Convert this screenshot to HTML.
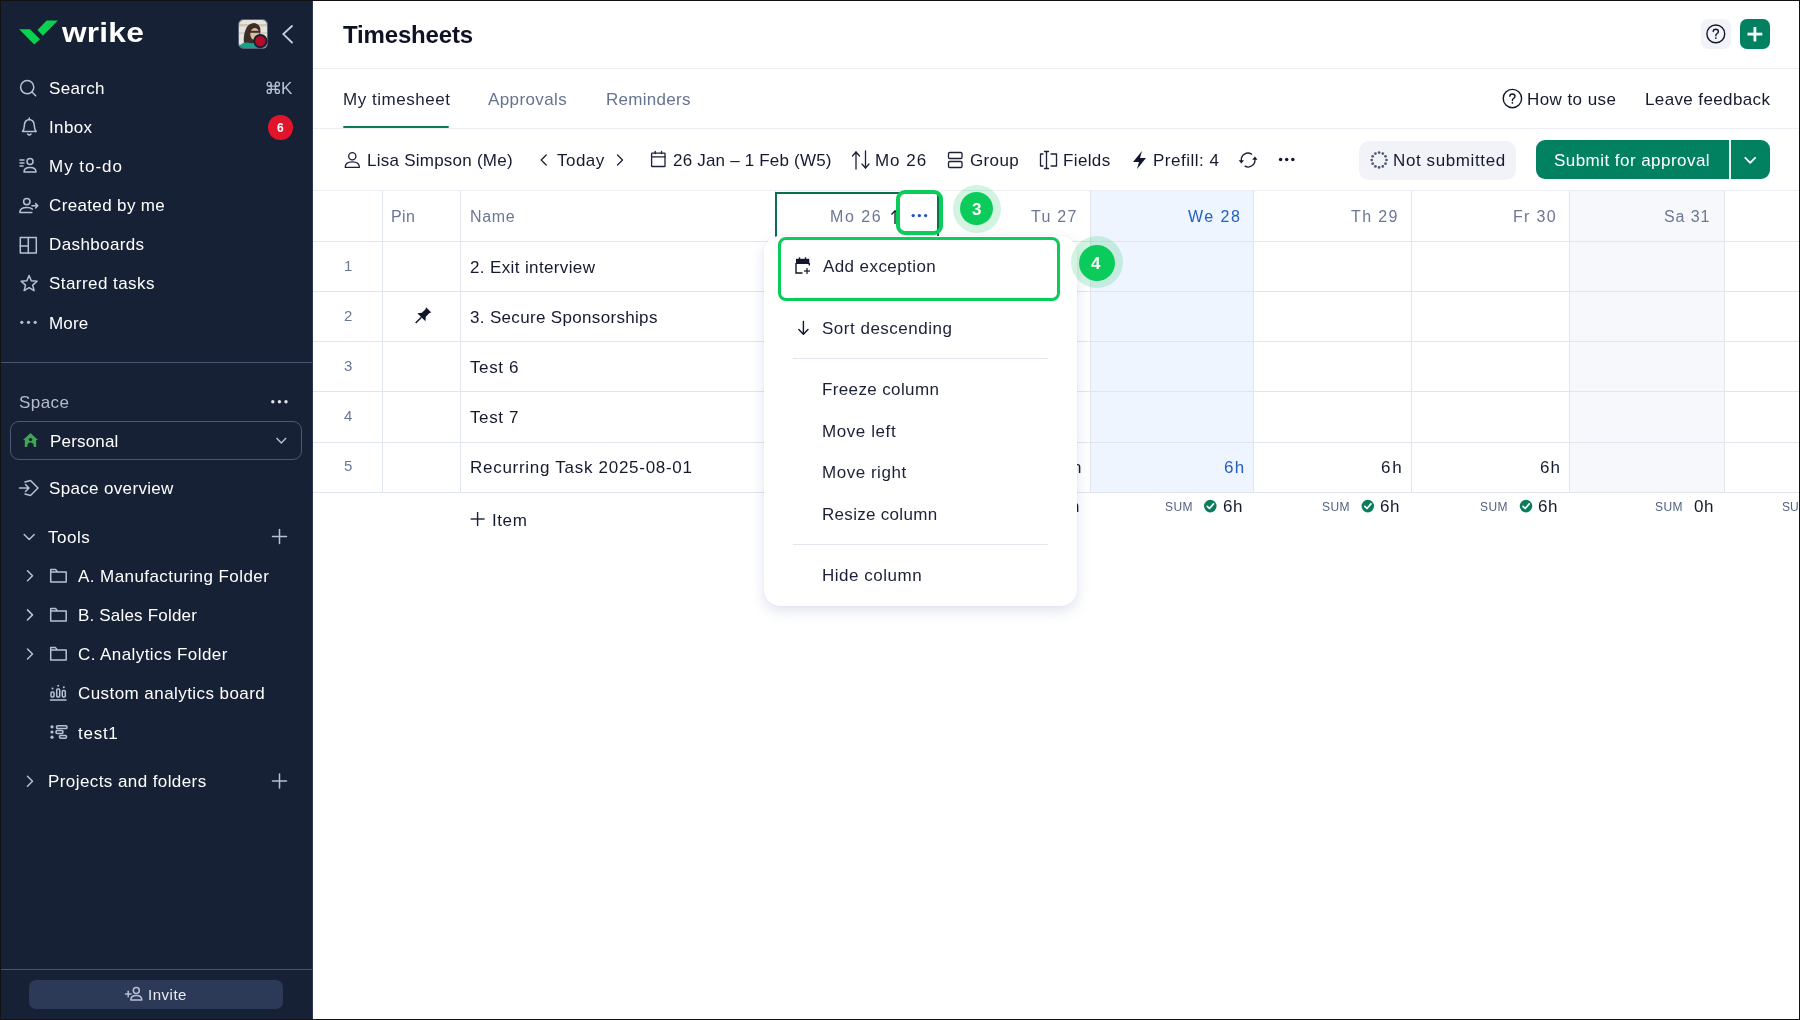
<!DOCTYPE html>
<html><head><meta charset="utf-8">
<style>
*{box-sizing:border-box;margin:0;padding:0}
html,body{width:1800px;height:1020px;overflow:hidden;background:#fff;font-family:"Liberation Sans",sans-serif;position:relative}
.t{position:absolute;white-space:nowrap;will-change:transform}
.b{position:absolute}
svg{position:absolute;overflow:visible}
</style></head><body>
<div class="b" style="left:0;top:0;width:313px;height:1020px;background:#172135"></div><svg style="left:0;top:0" width="313" height="60"><polygon points="19.2,29.2 30,29.2 40,39.2 34.2,44.6" fill="#0ad14e"/><polygon points="37.5,30 46.7,20.4 57.9,20.4 42.9,35.8" fill="#0ad14e"/></svg><div class="t" style="left:62.10px;top:18.20px;font-size:27px;line-height:30px;height:30px;color:#ffffff;font-weight:bold;letter-spacing:0.200px;transform:scaleX(1.17);transform-origin:0 0;">wrike</div><svg style="left:238px;top:19px" width="30" height="30" viewBox="0 0 30 30">
<rect width="30" height="30" fill="#e6e4df"/><rect x="0" y="5" width="30" height="2.5" fill="#cfc6b6"/><rect x="0" y="13" width="30" height="2" fill="#d6d0c6"/>
<path d="M6.5 27 Q4.5 18 7.5 11 Q10 4 16.5 4 Q22.5 5 22.5 12 L21.5 20 Q17 24 12 26 Z" fill="#3a2c26"/><ellipse cx="16.8" cy="15" rx="4.6" ry="6" fill="#dcbba3"/><rect x="12" y="11.8" width="9.6" height="2" fill="#3d302a"/>
<path d="M0 30 L2 26 Q6 22.5 12 24 Q18 24 22 30 Z" fill="#15a38e"/>
<path d="M0 0 H30 V30 H0 Z M6 0.5 H24 Q29.5 0.5 29.5 6 V24 Q29.5 29.5 24 29.5 H6 Q0.5 29.5 0.5 24 V6 Q0.5 0.5 6 0.5 Z" fill="#172135" fill-rule="evenodd"/>
<rect x="0.5" y="0.5" width="29" height="29" rx="5.5" fill="none" stroke="#56617c" stroke-width="1"/>
<circle cx="22.4" cy="22.1" r="6.2" fill="#b60a27" stroke="#172135" stroke-width="2"/></svg><svg style="left:0;top:0" width="313" height="60"><polyline points="292,26 283.3,34.1 292,42.5" fill="none" stroke="#c9cfdd" stroke-width="1.8" stroke-linecap="round"/></svg><div class="t" style="left:48.50px;top:79.20px;font-size:17px;line-height:19px;height:19px;color:#ffffff;font-weight:normal;letter-spacing:0.310px;">Search</div><div class="t" style="left:48.50px;top:118.25px;font-size:17px;line-height:19px;height:19px;color:#ffffff;font-weight:normal;letter-spacing:0.375px;">Inbox</div><div class="t" style="left:48.50px;top:157.30px;font-size:17px;line-height:19px;height:19px;color:#ffffff;font-weight:normal;letter-spacing:0.979px;">My to-do</div><div class="t" style="left:48.50px;top:196.35px;font-size:17px;line-height:19px;height:19px;color:#ffffff;font-weight:normal;letter-spacing:0.358px;">Created by me</div><div class="t" style="left:48.50px;top:235.40px;font-size:17px;line-height:19px;height:19px;color:#ffffff;font-weight:normal;letter-spacing:0.383px;">Dashboards</div><div class="t" style="left:48.50px;top:274.45px;font-size:17px;line-height:19px;height:19px;color:#ffffff;font-weight:normal;letter-spacing:0.438px;">Starred tasks</div><div class="t" style="left:48.90px;top:313.50px;font-size:17px;line-height:19px;height:19px;color:#ffffff;font-weight:normal;letter-spacing:0.150px;">More</div><svg style="left:0;top:0" width="313" height="120"><g fill="none" stroke="#b8c0d3" stroke-width="1.3"><circle cx="269.2" cy="84.2" r="2"/><circle cx="277.4" cy="84.2" r="2"/><circle cx="269.2" cy="91.4" r="2"/><circle cx="277.4" cy="91.4" r="2"/><path d="M271.2 84.2 V91.4 M275.4 84.2 V91.4 M269.2 86.2 H277.4 M269.2 89.4 H277.4"/></g></svg><div class="t" style="left:281.40px;top:79.10px;font-size:17px;line-height:19px;height:19px;color:#b8c0d3;font-weight:normal;letter-spacing:0.000px;">K</div><svg style="left:0;top:0" width="313" height="360">
<circle cx="27.2" cy="87.2" r="6.6" fill="none" stroke="#b8c0d3" stroke-width="1.5" stroke-linecap="round" stroke-linejoin="round"/><line x1="32" y1="92" x2="35.7" y2="95.7" fill="none" stroke="#b8c0d3" stroke-width="1.5" stroke-linecap="round" stroke-linejoin="round"/>
<path d="M22.5 131.5 Q24 130 24.3 126 Q24.3 120 29.3 119.5 Q34.3 120 34.3 126 Q34.6 130 36.2 131.5 Z" fill="none" stroke="#b8c0d3" stroke-width="1.5" stroke-linecap="round" stroke-linejoin="round"/><path d="M27.6 134 Q29.3 136 31 134" fill="none" stroke="#b8c0d3" stroke-width="1.5" stroke-linecap="round" stroke-linejoin="round"/><line x1="29.3" y1="118" x2="29.3" y2="119.5" fill="none" stroke="#b8c0d3" stroke-width="1.5" stroke-linecap="round" stroke-linejoin="round"/>
<line x1="20" y1="160" x2="24" y2="160" fill="none" stroke="#b8c0d3" stroke-width="1.5" stroke-linecap="round" stroke-linejoin="round"/><line x1="20" y1="163" x2="24" y2="163" fill="none" stroke="#b8c0d3" stroke-width="1.5" stroke-linecap="round" stroke-linejoin="round"/><line x1="20" y1="166" x2="23" y2="166" fill="none" stroke="#b8c0d3" stroke-width="1.5" stroke-linecap="round" stroke-linejoin="round"/>
<circle cx="30" cy="161.5" r="3" fill="none" stroke="#b8c0d3" stroke-width="1.5" stroke-linecap="round" stroke-linejoin="round"/><path d="M24 172 Q24 167.5 30 167.5 Q36 167.5 36 172 Z" fill="none" stroke="#b8c0d3" stroke-width="1.5" stroke-linecap="round" stroke-linejoin="round"/>
<circle cx="26.8" cy="201.6" r="3.2" fill="none" stroke="#b8c0d3" stroke-width="1.5" stroke-linecap="round" stroke-linejoin="round"/><path d="M19.8 212.6 Q19.8 207.6 26.8 207.6 Q30.8 207.6 32.3 209.1 M19.8 212.6 L31.8 212.6" fill="none" stroke="#b8c0d3" stroke-width="1.5" stroke-linecap="round" stroke-linejoin="round"/><path d="M32 205.8 L37.8 205.8 M35.6 203.6 L37.8 205.8 L35.6 208" fill="none" stroke="#b8c0d3" stroke-width="1.5" stroke-linecap="round" stroke-linejoin="round"/>
<rect x="20.3" y="237.5" width="16" height="15.5" fill="none" stroke="#b8c0d3" stroke-width="1.5" stroke-linecap="round" stroke-linejoin="round"/><line x1="28.3" y1="237.5" x2="28.3" y2="253" fill="none" stroke="#b8c0d3" stroke-width="1.5" stroke-linecap="round" stroke-linejoin="round"/><line x1="20.3" y1="246" x2="28.3" y2="246" fill="none" stroke="#b8c0d3" stroke-width="1.5" stroke-linecap="round" stroke-linejoin="round"/>
<polygon points="29.10,275.50 31.33,280.83 37.09,281.30 32.71,285.07 34.04,290.70 29.10,287.70 24.16,290.70 25.49,285.07 21.11,281.30 26.87,280.83" fill="none" stroke="#b8c0d3" stroke-width="1.5" stroke-linecap="round" stroke-linejoin="round"/>
<circle cx="21.8" cy="322.3" r="1.6" fill="#b8c0d3"/><circle cx="28.5" cy="322.3" r="1.6" fill="#b8c0d3"/><circle cx="35.2" cy="322.3" r="1.6" fill="#b8c0d3"/>
</svg><div class="b" style="left:268px;top:115px;width:24.5px;height:24.5px;border-radius:50%;background:#e0142b"></div><div class="t" style="left:276.50px;top:120.50px;font-size:12px;line-height:14px;height:14px;color:#ffffff;font-weight:bold;letter-spacing:0.000px;">6</div><div class="b" style="left:1px;top:362px;width:311px;height:1px;background:#475371"></div><div class="t" style="left:18.60px;top:393.30px;font-size:17px;line-height:19px;height:19px;color:#b6bdcc;font-weight:normal;letter-spacing:0.450px;">Space</div><svg style="left:0;top:0" width="313" height="420"><circle cx="272.8" cy="401.7" r="1.7" fill="#dfe3ea"/><circle cx="279.4" cy="401.7" r="1.7" fill="#dfe3ea"/><circle cx="286" cy="401.7" r="1.7" fill="#dfe3ea"/></svg><div class="b" style="left:10px;top:421px;width:292px;height:38.5px;border-radius:9px;border:1px solid #4b5876"></div><svg style="left:0;top:0" width="313" height="500"><path d="M23 440 L30.5 433 L38 440 L36.2 440 L36.2 447 L24.8 447 L24.8 440 Z" fill="#3fa754"/><circle cx="30.5" cy="439.6" r="1.7" fill="#172135"/><path d="M27.2 447 Q27.2 442.6 30.5 442.6 Q33.8 442.6 33.8 447 Z" fill="#172135"/><polyline points="276.5,438 281.3,443 286.1,438" fill="none" stroke="#b8c0d3" stroke-width="1.4"/><path d="M19.5 488 L29 488 M25.5 484.5 L29 488 L25.5 491.5 M25 482 L30.5 480.5 L38 488 L30.5 495.5 L25 494" fill="none" stroke="#b8c0d3" stroke-width="1.5" stroke-linecap="round" stroke-linejoin="round"/></svg><div class="t" style="left:49.70px;top:431.70px;font-size:17px;line-height:19px;height:19px;color:#ffffff;font-weight:normal;letter-spacing:0.186px;">Personal</div><div class="t" style="left:48.60px;top:478.70px;font-size:17px;line-height:19px;height:19px;color:#ffffff;font-weight:normal;letter-spacing:0.338px;">Space overview</div><svg style="left:0;top:0" width="313" height="800"><polyline points="24.2,534.5 29.2,539.5 34.2,534.5" fill="none" stroke="#b8c0d3" stroke-width="1.5" stroke-linecap="round" stroke-linejoin="round"/><line x1="279.5" y1="529.5" x2="279.5" y2="543.5" fill="none" stroke="#b8c0d3" stroke-width="1.5" stroke-linecap="round" stroke-linejoin="round"/><line x1="272.5" y1="536.5" x2="286.5" y2="536.5" fill="none" stroke="#b8c0d3" stroke-width="1.5" stroke-linecap="round" stroke-linejoin="round"/><line x1="279.5" y1="774" x2="279.5" y2="788" fill="none" stroke="#b8c0d3" stroke-width="1.5" stroke-linecap="round" stroke-linejoin="round"/><line x1="272.5" y1="781" x2="286.5" y2="781" fill="none" stroke="#b8c0d3" stroke-width="1.5" stroke-linecap="round" stroke-linejoin="round"/><polyline points="27.5,570.8 32.5,575.8 27.5,580.8" fill="none" stroke="#b8c0d3" stroke-width="1.5" stroke-linecap="round" stroke-linejoin="round"/><polyline points="27.5,609.9 32.5,614.9 27.5,619.9" fill="none" stroke="#b8c0d3" stroke-width="1.5" stroke-linecap="round" stroke-linejoin="round"/><polyline points="27.5,649 32.5,654 27.5,659" fill="none" stroke="#b8c0d3" stroke-width="1.5" stroke-linecap="round" stroke-linejoin="round"/><polyline points="27.5,776.2 32.5,781.2 27.5,786.2" fill="none" stroke="#b8c0d3" stroke-width="1.5" stroke-linecap="round" stroke-linejoin="round"/><path d="M50.7 569.4 L50.7 581.9 L66.2 581.9 L66.2 571.9 L57.5 571.9 L55.5 569.4 Z M50.7 571.9 L57.5 571.9" fill="none" stroke="#b8c0d3" stroke-width="1.5" stroke-linecap="round" stroke-linejoin="round"/><path d="M50.7 608.5 L50.7 621.0 L66.2 621.0 L66.2 611.0 L57.5 611.0 L55.5 608.5 Z M50.7 611.0 L57.5 611.0" fill="none" stroke="#b8c0d3" stroke-width="1.5" stroke-linecap="round" stroke-linejoin="round"/><path d="M50.7 647.6 L50.7 660.1 L66.2 660.1 L66.2 650.1 L57.5 650.1 L55.5 647.6 Z M50.7 650.1 L57.5 650.1" fill="none" stroke="#b8c0d3" stroke-width="1.5" stroke-linecap="round" stroke-linejoin="round"/><g fill="none" stroke="#b8c0d3" stroke-width="1.5" stroke-linecap="round" stroke-linejoin="round"><rect x="51" y="692" width="3" height="5" rx="1"/><rect x="56.7" y="689" width="3" height="8" rx="1"/><rect x="62.3" y="690.5" width="3" height="6.5" rx="1"/><line x1="50.5" y1="700" x2="66" y2="700"/></g>
<circle cx="52.5" cy="688.5" r="1" fill="#b8c0d3"/><circle cx="58.2" cy="685.7" r="1" fill="#b8c0d3"/><circle cx="63.8" cy="687.3" r="1" fill="#b8c0d3"/>
<g fill="#b8c0d3"><circle cx="52" cy="726.8" r="1.6"/><circle cx="52" cy="732" r="1.6"/><circle cx="52" cy="737.2" r="1.6"/></g>
<g fill="none" stroke="#b8c0d3" stroke-width="1.5" stroke-linecap="round" stroke-linejoin="round"><rect x="56.5" y="725.8" width="10.5" height="2.8" rx="1.2"/><rect x="56" y="730.6" width="7" height="2.8" rx="1.2"/><rect x="59.5" y="735.4" width="7" height="2.8" rx="1.2"/></g>
</svg><div class="t" style="left:48.40px;top:527.90px;font-size:17px;line-height:19px;height:19px;color:#ffffff;font-weight:normal;letter-spacing:0.500px;">Tools</div><div class="t" style="left:77.80px;top:567.10px;font-size:17px;line-height:19px;height:19px;color:#ffffff;font-weight:normal;letter-spacing:0.427px;">A. Manufacturing Folder</div><div class="t" style="left:77.80px;top:606.20px;font-size:17px;line-height:19px;height:19px;color:#ffffff;font-weight:normal;letter-spacing:0.186px;">B. Sales Folder</div><div class="t" style="left:77.80px;top:645.30px;font-size:17px;line-height:19px;height:19px;color:#ffffff;font-weight:normal;letter-spacing:0.422px;">C. Analytics Folder</div><div class="t" style="left:77.80px;top:684.40px;font-size:17px;line-height:19px;height:19px;color:#ffffff;font-weight:normal;letter-spacing:0.436px;">Custom analytics board</div><div class="t" style="left:77.80px;top:723.50px;font-size:17px;line-height:19px;height:19px;color:#ffffff;font-weight:normal;letter-spacing:0.737px;">test1</div><div class="t" style="left:48.40px;top:772.40px;font-size:17px;line-height:19px;height:19px;color:#ffffff;font-weight:normal;letter-spacing:0.418px;">Projects and folders</div><div class="b" style="left:1px;top:969px;width:311px;height:1px;background:#475371"></div><div class="b" style="left:312px;top:0;width:1px;height:1020px;background:#2b3858"></div><div class="b" style="left:29.3px;top:980px;width:253.4px;height:29px;border-radius:7px;background:#2c3a58"></div><svg style="left:0;top:0" width="313" height="1020"><g fill="none" stroke="#b8c0d3" stroke-width="1.5" stroke-linecap="round" stroke-linejoin="round" stroke="#e6e9ef" stroke-width="1.3"><line x1="125.5" y1="994" x2="131" y2="994"/><line x1="128.2" y1="991.3" x2="128.2" y2="996.7"/><circle cx="136.3" cy="990.5" r="3"/><path d="M130.8 1000 Q130.8 995.5 136.3 995.5 Q141.8 995.5 141.8 1000 Z"/></g></svg><div class="t" style="left:148.20px;top:985.60px;font-size:15px;line-height:17px;height:17px;color:#e9ecf2;font-weight:normal;letter-spacing:0.510px;">Invite</div><div class="t" style="left:343.30px;top:20.50px;font-size:24px;line-height:27px;height:27px;color:#0d1324;font-weight:bold;letter-spacing:-0.172px;">Timesheets</div><div class="b" style="left:1701px;top:19px;width:29.5px;height:29.5px;border-radius:7px;background:#f2f3f8"></div><div class="b" style="left:1740px;top:19px;width:29.5px;height:29.5px;border-radius:7px;background:#028161"></div><svg style="left:0;top:0" width="1800" height="200">
<circle cx="1715.8" cy="33.9" r="8.9" fill="none" stroke="#111729" stroke-width="1.4"/>
<path d="M1713.2 31.6 Q1713.2 29.3 1715.8 29.3 Q1718.4 29.3 1718.4 31.5 Q1718.4 33 1716.6 34 Q1715.8 34.6 1715.8 35.8" fill="none" stroke="#111729" stroke-width="1.4" stroke-linecap="round"/><circle cx="1715.8" cy="38.1" r="0.9" fill="#111729"/>
<line x1="1754.9" y1="27" x2="1754.9" y2="41.4" stroke="#fff" stroke-width="2.8"/><line x1="1747.5" y1="34.1" x2="1762.3" y2="34.1" stroke="#fff" stroke-width="2.8"/>
</svg><div class="b" style="left:313px;top:68px;width:1487px;height:1px;background:#eceef4"></div><div class="t" style="left:342.60px;top:89.90px;font-size:17px;line-height:19px;height:19px;color:#1b2136;font-weight:normal;letter-spacing:0.536px;">My timesheet</div><div class="t" style="left:488.20px;top:89.90px;font-size:17px;line-height:19px;height:19px;color:#667391;font-weight:normal;letter-spacing:0.387px;">Approvals</div><div class="t" style="left:605.70px;top:89.90px;font-size:17px;line-height:19px;height:19px;color:#667391;font-weight:normal;letter-spacing:0.275px;">Reminders</div><div class="b" style="left:313px;top:128px;width:1487px;height:1px;background:#eceef4"></div><div class="b" style="left:342.7px;top:126px;width:106.5px;height:2px;border-radius:1px;background:#0b7b5a"></div><svg style="left:0;top:0" width="1800" height="200">
<circle cx="1512.4" cy="98.6" r="9.2" fill="none" stroke="#111729" stroke-width="1.4"/>
<path d="M1509.8 96.3 Q1509.8 94 1512.4 94 Q1515 94 1515 96.2 Q1515 97.7 1513.2 98.7 Q1512.4 99.3 1512.4 100.5" fill="none" stroke="#111729" stroke-width="1.4" stroke-linecap="round"/><circle cx="1512.4" cy="102.8" r="0.9" fill="#111729"/>
</svg><div class="t" style="left:1527.20px;top:89.80px;font-size:17px;line-height:19px;height:19px;color:#151b2f;font-weight:normal;letter-spacing:0.428px;">How to use</div><div class="t" style="left:1644.90px;top:89.80px;font-size:17px;line-height:19px;height:19px;color:#151b2f;font-weight:normal;letter-spacing:0.377px;">Leave feedback</div><div class="b" style="left:313px;top:190px;width:1487px;height:1px;background:#eceef4"></div><svg style="left:0;top:0" width="1800" height="200">
<circle cx="352.3" cy="156.3" r="3.6" fill="none" stroke="#1b2136" stroke-width="1.3" stroke-linecap="round" stroke-linejoin="round"/><path d="M345.2 167.3 Q345.2 161.8 352.3 161.8 Q359.4 161.8 359.4 167.3 Z" fill="none" stroke="#1b2136" stroke-width="1.3" stroke-linecap="round" stroke-linejoin="round"/>
<polyline points="546.2,155 541.2,160 546.2,165" fill="none" stroke="#1b2136" stroke-width="1.3" stroke-linecap="round" stroke-linejoin="round" stroke-width="1.15"/>
<polyline points="617.5,155 622.5,160 617.5,165" fill="none" stroke="#1b2136" stroke-width="1.3" stroke-linecap="round" stroke-linejoin="round" stroke-width="1.15"/>
<rect x="651.6" y="153.2" width="13.4" height="13.3" rx="0.6" fill="none" stroke="#1b2136" stroke-width="1.3" stroke-linecap="round" stroke-linejoin="round"/><line x1="651.6" y1="156.9" x2="665" y2="156.9" fill="none" stroke="#1b2136" stroke-width="1.3" stroke-linecap="round" stroke-linejoin="round"/><line x1="655.2" y1="151.5" x2="655.2" y2="153.5" fill="none" stroke="#1b2136" stroke-width="1.3" stroke-linecap="round" stroke-linejoin="round"/><line x1="661.5" y1="151.5" x2="661.5" y2="153.5" fill="none" stroke="#1b2136" stroke-width="1.3" stroke-linecap="round" stroke-linejoin="round"/>
<line x1="856" y1="152" x2="856" y2="169" fill="none" stroke="#1b2136" stroke-width="1.3" stroke-linecap="round" stroke-linejoin="round"/><polyline points="852.5,156 856,152 859.5,156" fill="none" stroke="#1b2136" stroke-width="1.3" stroke-linecap="round" stroke-linejoin="round"/>
<line x1="865.5" y1="151" x2="865.5" y2="168" fill="none" stroke="#1b2136" stroke-width="1.3" stroke-linecap="round" stroke-linejoin="round"/><polyline points="862,164 865.5,168 869,164" fill="none" stroke="#1b2136" stroke-width="1.3" stroke-linecap="round" stroke-linejoin="round"/>
<rect x="948.5" y="152.5" width="13.5" height="6" rx="1.2" fill="none" stroke="#1b2136" stroke-width="1.3" stroke-linecap="round" stroke-linejoin="round"/><rect x="948.5" y="161.5" width="13.5" height="6" rx="1.2" fill="none" stroke="#1b2136" stroke-width="1.3" stroke-linecap="round" stroke-linejoin="round"/>
<path d="M1043 154 L1040.5 154 L1040.5 166 L1043 166 M1051 154 L1056.5 154 L1056.5 166 L1051 166" fill="none" stroke="#1b2136" stroke-width="1.3" stroke-linecap="round" stroke-linejoin="round"/><line x1="1046.5" y1="151.5" x2="1046.5" y2="168.5" fill="none" stroke="#1b2136" stroke-width="1.3" stroke-linecap="round" stroke-linejoin="round"/><line x1="1044.5" y1="151.5" x2="1048.5" y2="151.5" fill="none" stroke="#1b2136" stroke-width="1.3" stroke-linecap="round" stroke-linejoin="round"/><line x1="1044.5" y1="168.5" x2="1048.5" y2="168.5" fill="none" stroke="#1b2136" stroke-width="1.3" stroke-linecap="round" stroke-linejoin="round"/>
<path d="M1142 151 L1133 162 L1139 162 L1137 169 L1146 158 L1140 158 Z" fill="#10172b"/>
<path d="M1251.6 154.1 A6.8 6.8 0 0 0 1241.3 160.5" fill="none" stroke="#1b2136" stroke-width="1.3" stroke-linecap="round" stroke-linejoin="round"/><path d="M1238.7 160.2 L1244 160.2 L1241.35 163.6 Z" fill="#10172b"/>
<path d="M1245 166.2 A6.8 6.8 0 0 0 1254.9 159.5" fill="none" stroke="#1b2136" stroke-width="1.3" stroke-linecap="round" stroke-linejoin="round"/><path d="M1252.3 159.8 L1257.5 159.8 L1254.9 156.6 Z" fill="#10172b"/>
<circle cx="1280.6" cy="159.4" r="1.75" fill="#10172b"/><circle cx="1286.7" cy="159.4" r="1.75" fill="#10172b"/><circle cx="1292.8" cy="159.4" r="1.75" fill="#10172b"/>
</svg><div class="t" style="left:366.70px;top:151.00px;font-size:17px;line-height:19px;height:19px;color:#151b2f;font-weight:normal;letter-spacing:0.244px;">Lisa Simpson (Me)</div><div class="t" style="left:557.10px;top:151.00px;font-size:17px;line-height:19px;height:19px;color:#151b2f;font-weight:normal;letter-spacing:0.487px;">Today</div><div class="t" style="left:672.70px;top:151.00px;font-size:17px;line-height:19px;height:19px;color:#151b2f;font-weight:normal;letter-spacing:0.197px;">26 Jan – 1 Feb (W5)</div><div class="t" style="left:875.40px;top:151.00px;font-size:17px;line-height:19px;height:19px;color:#151b2f;font-weight:normal;letter-spacing:0.963px;">Mo 26</div><div class="t" style="left:970.30px;top:151.00px;font-size:17px;line-height:19px;height:19px;color:#151b2f;font-weight:normal;letter-spacing:0.363px;">Group</div><div class="t" style="left:1062.90px;top:151.00px;font-size:17px;line-height:19px;height:19px;color:#151b2f;font-weight:normal;letter-spacing:0.370px;">Fields</div><div class="t" style="left:1153.10px;top:151.00px;font-size:17px;line-height:19px;height:19px;color:#151b2f;font-weight:normal;letter-spacing:0.500px;">Prefill: 4</div><div class="b" style="left:1359.2px;top:140.5px;width:156.5px;height:39px;border-radius:10px;background:#f2f3f8"></div><svg style="left:0;top:0" width="1800" height="200"><circle cx="1386.50" cy="160.00" r="1.35" fill="#4b5877"/><circle cx="1385.51" cy="163.70" r="1.35" fill="#4b5877"/><circle cx="1382.80" cy="166.41" r="1.35" fill="#4b5877"/><circle cx="1379.10" cy="167.40" r="1.35" fill="#4b5877"/><circle cx="1375.40" cy="166.41" r="1.35" fill="#4b5877"/><circle cx="1372.69" cy="163.70" r="1.35" fill="#4b5877"/><circle cx="1371.70" cy="160.00" r="1.35" fill="#4b5877"/><circle cx="1372.69" cy="156.30" r="1.35" fill="#4b5877"/><circle cx="1375.40" cy="153.59" r="1.35" fill="#4b5877"/><circle cx="1379.10" cy="152.60" r="1.35" fill="#4b5877"/><circle cx="1382.80" cy="153.59" r="1.35" fill="#4b5877"/><circle cx="1385.51" cy="156.30" r="1.35" fill="#4b5877"/></svg><div class="t" style="left:1393.40px;top:151.00px;font-size:17px;line-height:19px;height:19px;color:#151b2f;font-weight:normal;letter-spacing:0.608px;">Not submitted</div><div class="b" style="left:1535.5px;top:140.2px;width:234px;height:39.2px;border-radius:9px;background:#028161"></div><div class="b" style="left:1729px;top:140.2px;width:1.5px;height:39.2px;background:#e8f3ef"></div><svg style="left:0;top:0" width="1800" height="200"><polyline points="1745.3,157.8 1750.2,162.8 1755.1,157.8" fill="none" stroke="#fff" stroke-width="1.8" stroke-linecap="round" stroke-linejoin="round"/></svg><div class="t" style="left:1554.30px;top:151.00px;font-size:17px;line-height:19px;height:19px;color:#ffffff;font-weight:normal;letter-spacing:0.456px;">Submit for approval</div><div class="b" style="left:1090.5px;top:191px;width:163px;height:301px;background:#eef5fe"></div><div class="b" style="left:1569.5px;top:191px;width:155px;height:301px;background:#f7f8fb"></div><div class="b" style="left:313px;top:241px;width:1487px;height:1px;background:#e1e5f0"></div><div class="b" style="left:313px;top:291px;width:1487px;height:1px;background:#e1e5f0"></div><div class="b" style="left:313px;top:341.2px;width:1487px;height:1px;background:#e1e5f0"></div><div class="b" style="left:313px;top:391.4px;width:1487px;height:1px;background:#e1e5f0"></div><div class="b" style="left:313px;top:441.7px;width:1487px;height:1px;background:#e1e5f0"></div><div class="b" style="left:313px;top:492px;width:1487px;height:1px;background:#e1e5f0"></div><div class="b" style="left:382px;top:191px;width:1px;height:301.5px;background:#e1e5f0"></div><div class="b" style="left:460px;top:191px;width:1px;height:301.5px;background:#e1e5f0"></div><div class="b" style="left:775px;top:191px;width:1px;height:301.5px;background:#e1e5f0"></div><div class="b" style="left:938px;top:191px;width:1px;height:301.5px;background:#e1e5f0"></div><div class="b" style="left:1090px;top:191px;width:1px;height:301.5px;background:#e1e5f0"></div><div class="b" style="left:1253px;top:191px;width:1px;height:301.5px;background:#e1e5f0"></div><div class="b" style="left:1411px;top:191px;width:1px;height:301.5px;background:#e1e5f0"></div><div class="b" style="left:1569px;top:191px;width:1px;height:301.5px;background:#e1e5f0"></div><div class="b" style="left:1724px;top:191px;width:1px;height:301.5px;background:#e1e5f0"></div><div class="t" style="left:391.20px;top:208.00px;font-size:16px;line-height:17px;height:17px;color:#6a7795;font-weight:normal;letter-spacing:0.325px;">Pin</div><div class="t" style="left:469.90px;top:208.00px;font-size:16px;line-height:17px;height:17px;color:#6a7795;font-weight:normal;letter-spacing:0.633px;">Name</div><div class="t" style="left:829.90px;top:208.00px;font-size:16px;line-height:17px;height:17px;color:#6a7795;font-weight:normal;letter-spacing:1.563px;">Mo 26</div><div class="t" style="left:1030.90px;top:208.00px;font-size:16px;line-height:17px;height:17px;color:#6a7795;font-weight:normal;letter-spacing:1.250px;">Tu 27</div><div class="t" style="left:1188.20px;top:208.00px;font-size:16px;line-height:17px;height:17px;color:#2260c0;font-weight:normal;letter-spacing:1.462px;">We 28</div><div class="t" style="left:1351.20px;top:208.00px;font-size:16px;line-height:17px;height:17px;color:#6a7795;font-weight:normal;letter-spacing:1.375px;">Th 29</div><div class="t" style="left:1512.60px;top:208.00px;font-size:16px;line-height:17px;height:17px;color:#6a7795;font-weight:normal;letter-spacing:1.312px;">Fr 30</div><div class="t" style="left:1664.40px;top:208.00px;font-size:16px;line-height:17px;height:17px;color:#6a7795;font-weight:normal;letter-spacing:0.925px;">Sa 31</div><div class="t" style="left:344.30px;top:257.30px;font-size:15px;line-height:17px;height:17px;color:#6a7795;font-weight:normal;letter-spacing:0.000px;">1</div><div class="t" style="left:469.80px;top:257.80px;font-size:17px;line-height:19px;height:19px;color:#151b2f;font-weight:normal;letter-spacing:0.369px;">2. Exit interview</div><div class="t" style="left:344.30px;top:307.30px;font-size:15px;line-height:17px;height:17px;color:#6a7795;font-weight:normal;letter-spacing:0.000px;">2</div><div class="t" style="left:469.80px;top:307.80px;font-size:17px;line-height:19px;height:19px;color:#151b2f;font-weight:normal;letter-spacing:0.329px;">3. Secure Sponsorships</div><div class="t" style="left:344.30px;top:357.30px;font-size:15px;line-height:17px;height:17px;color:#6a7795;font-weight:normal;letter-spacing:0.000px;">3</div><div class="t" style="left:469.80px;top:357.80px;font-size:17px;line-height:19px;height:19px;color:#151b2f;font-weight:normal;letter-spacing:0.610px;">Test 6</div><div class="t" style="left:344.30px;top:407.30px;font-size:15px;line-height:17px;height:17px;color:#6a7795;font-weight:normal;letter-spacing:0.000px;">4</div><div class="t" style="left:469.80px;top:407.80px;font-size:17px;line-height:19px;height:19px;color:#151b2f;font-weight:normal;letter-spacing:0.610px;">Test 7</div><div class="t" style="left:344.30px;top:457.30px;font-size:15px;line-height:17px;height:17px;color:#6a7795;font-weight:normal;letter-spacing:0.000px;">5</div><div class="t" style="left:469.80px;top:457.80px;font-size:17px;line-height:19px;height:19px;color:#151b2f;font-weight:normal;letter-spacing:0.719px;">Recurring Task 2025-08-01</div><svg style="left:0;top:0" width="1800" height="600"><g transform="translate(422.6,316) rotate(45) scale(1.15)"><path d="M-3.2 -7.5 L3.2 -7.5 L2.4 -6 L2.4 -1.5 L5 1.5 L-5 1.5 L-2.4 -1.5 L-2.4 -6 Z" fill="#10172b"/><line x1="0" y1="1.5" x2="0" y2="8.5" stroke="#10172b" stroke-width="1.3"/></g></svg><div class="t" style="left:1223.50px;top:457.80px;font-size:17px;line-height:19px;height:19px;color:#2260c0;font-weight:normal;letter-spacing:1.400px;">6h</div><div class="t" style="left:1380.90px;top:457.80px;font-size:17px;line-height:19px;height:19px;color:#151b2f;font-weight:normal;letter-spacing:1.700px;">6h</div><div class="t" style="left:1539.50px;top:457.80px;font-size:17px;line-height:19px;height:19px;color:#151b2f;font-weight:normal;letter-spacing:1.000px;">6h</div><div class="t" style="left:1062.60px;top:457.80px;font-size:17px;line-height:19px;height:19px;color:#151b2f;font-weight:normal;letter-spacing:-0.400px;">6h</div><div class="t" style="left:1164.60px;top:500.10px;font-size:12px;line-height:14px;height:14px;color:#526180;font-weight:normal;letter-spacing:0.375px;">SUM</div><svg style="left:0;top:0" width="1800" height="600"><circle cx="1210.3" cy="506.1" r="6.3" fill="#0b7d5d"/><polyline points="1207.3,506.3 1209.5,508.5 1213.5,503.9" fill="none" stroke="#fff" stroke-width="1.7" stroke-linecap="round" stroke-linejoin="round"/></svg><div class="t" style="left:1222.90px;top:497.20px;font-size:17px;line-height:19px;height:19px;color:#151b2f;font-weight:normal;letter-spacing:0.600px;">6h</div><div class="t" style="left:1322.30px;top:500.10px;font-size:12px;line-height:14px;height:14px;color:#526180;font-weight:normal;letter-spacing:0.375px;">SUM</div><svg style="left:0;top:0" width="1800" height="600"><circle cx="1367.8" cy="506.1" r="6.3" fill="#0b7d5d"/><polyline points="1364.8,506.3 1367.0,508.5 1371.0,503.9" fill="none" stroke="#fff" stroke-width="1.7" stroke-linecap="round" stroke-linejoin="round"/></svg><div class="t" style="left:1380.30px;top:497.20px;font-size:17px;line-height:19px;height:19px;color:#151b2f;font-weight:normal;letter-spacing:0.600px;">6h</div><div class="t" style="left:1479.80px;top:500.10px;font-size:12px;line-height:14px;height:14px;color:#526180;font-weight:normal;letter-spacing:0.375px;">SUM</div><svg style="left:0;top:0" width="1800" height="600"><circle cx="1526" cy="506.1" r="6.3" fill="#0b7d5d"/><polyline points="1523,506.3 1525.2,508.5 1529.2,503.9" fill="none" stroke="#fff" stroke-width="1.7" stroke-linecap="round" stroke-linejoin="round"/></svg><div class="t" style="left:1537.90px;top:497.20px;font-size:17px;line-height:19px;height:19px;color:#151b2f;font-weight:normal;letter-spacing:0.600px;">6h</div><div class="t" style="left:1655.10px;top:500.10px;font-size:12px;line-height:14px;height:14px;color:#526180;font-weight:normal;letter-spacing:0.375px;">SUM</div><div class="t" style="left:1693.70px;top:497.20px;font-size:17px;line-height:19px;height:19px;color:#151b2f;font-weight:normal;letter-spacing:0.600px;">0h</div><div class="t" style="left:1781.60px;top:500.10px;font-size:12px;line-height:14px;height:14px;color:#526180;font-weight:normal;letter-spacing:0.000px;">SUM</div><div class="t" style="left:1061.30px;top:497.20px;font-size:17px;line-height:19px;height:19px;color:#151b2f;font-weight:normal;letter-spacing:-0.400px;">6h</div><svg style="left:0;top:0" width="1800" height="600"><line x1="477.6" y1="512" x2="477.6" y2="526" stroke="#1b2136" stroke-width="1.4"/><line x1="470.6" y1="519" x2="484.6" y2="519" stroke="#1b2136" stroke-width="1.4"/></svg><div class="t" style="left:492.10px;top:510.60px;font-size:17px;line-height:19px;height:19px;color:#151b2f;font-weight:normal;letter-spacing:0.583px;">Item</div><div class="b" style="left:775px;top:192px;width:164px;height:60px;border:2px solid #0a6e50;border-bottom:none"></div><div class="t" style="left:829.90px;top:208.00px;font-size:16px;line-height:17px;height:17px;color:#6a7795;font-weight:normal;letter-spacing:1.563px;">Mo 26</div><div class="b" style="left:777px;top:194px;width:160px;height:46px;background:#fff"></div><div class="t" style="left:829.90px;top:208.00px;font-size:16px;line-height:17px;height:17px;color:#6a7795;font-weight:normal;letter-spacing:1.563px;">Mo 26</div><svg style="left:0;top:0" width="1800" height="600"><path d="M891.5 214.5 L895 210.8 L898.5 214.5" fill="none" stroke="#1b2136" stroke-width="1.4"/><line x1="895" y1="211" x2="895" y2="224" stroke="#1b2136" stroke-width="1.4"/><circle cx="913.2" cy="215.6" r="1.65" fill="#1f4fcf"/><circle cx="919.4" cy="215.6" r="1.65" fill="#1f4fcf"/><circle cx="925.6" cy="215.6" r="1.65" fill="#1f4fcf"/></svg><div class="b" style="left:763.5px;top:236px;width:313.5px;height:369.5px;border-radius:16px;background:#fff;box-shadow:0 5px 14px rgba(50,70,150,0.15),0 0 3px rgba(50,70,150,0.06)"></div><div class="b" style="left:793px;top:296.5px;width:254.5px;height:1px;background:#e8ebf2"></div><div class="b" style="left:793px;top:358px;width:254.5px;height:1px;background:#e3e6ee"></div><div class="b" style="left:793px;top:544px;width:254.5px;height:1px;background:#e3e6ee"></div><div class="t" style="left:822.50px;top:257.40px;font-size:17px;line-height:19px;height:19px;color:#1b2136;font-weight:normal;letter-spacing:0.413px;">Add exception</div><div class="t" style="left:822.10px;top:318.60px;font-size:17px;line-height:19px;height:19px;color:#1b2136;font-weight:normal;letter-spacing:0.504px;">Sort descending</div><div class="t" style="left:821.50px;top:379.90px;font-size:17px;line-height:19px;height:19px;color:#1b2136;font-weight:normal;letter-spacing:0.371px;">Freeze column</div><div class="t" style="left:821.50px;top:421.60px;font-size:17px;line-height:19px;height:19px;color:#1b2136;font-weight:normal;letter-spacing:0.581px;">Move left</div><div class="t" style="left:821.50px;top:462.80px;font-size:17px;line-height:19px;height:19px;color:#1b2136;font-weight:normal;letter-spacing:0.528px;">Move right</div><div class="t" style="left:821.50px;top:504.70px;font-size:17px;line-height:19px;height:19px;color:#1b2136;font-weight:normal;letter-spacing:0.300px;">Resize column</div><div class="t" style="left:821.50px;top:566.00px;font-size:17px;line-height:19px;height:19px;color:#1b2136;font-weight:normal;letter-spacing:0.510px;">Hide column</div><svg style="left:0;top:0" width="1800" height="700">
<path d="M796 264 L796 258.8 L809.3 258.8 L809.3 264 Z" fill="#10172b"/><line x1="799.5" y1="257.3" x2="799.5" y2="259" stroke="#10172b" stroke-width="1.4"/><line x1="805.5" y1="257.3" x2="805.5" y2="259" stroke="#10172b" stroke-width="1.4"/>
<path d="M796 263 L796 273 L802.5 273" fill="none" stroke="#10172b" stroke-width="1.4"/><line x1="809.3" y1="263" x2="809.3" y2="265.5" stroke="#10172b" stroke-width="1.4"/>
<line x1="807" y1="268" x2="807" y2="274" stroke="#10172b" stroke-width="1.2"/><line x1="804" y1="271" x2="810" y2="271" stroke="#10172b" stroke-width="1.2"/>
<line x1="803.4" y1="321.5" x2="803.4" y2="334" stroke="#10172b" stroke-width="1.4" stroke-linecap="round"/><polyline points="798.8,329.5 803.4,334.3 808,329.5" fill="none" stroke="#10172b" stroke-width="1.4" stroke-linecap="round" stroke-linejoin="round"/>
</svg><div class="b" style="left:896px;top:189.5px;width:47px;height:45.5px;border:4px solid #0bcb5b;border-radius:9px"></div><div class="b" style="left:778px;top:236.8px;width:282px;height:64px;border:3.6px solid #0bcb5b;border-radius:8px"></div><div class="b" style="left:953.2px;top:185.3px;width:47.4px;height:47.4px;border-radius:50%;background:rgba(12,196,90,0.18)"></div><div class="b" style="left:960.3px;top:192.2px;width:33.2px;height:33.2px;border-radius:50%;background:#0bcb5b"></div><div class="t" style="left:971.50px;top:200.00px;font-size:17px;line-height:19px;height:19px;color:#fff;font-weight:bold;letter-spacing:0.000px;">3</div><div class="b" style="left:1071px;top:236px;width:52px;height:52px;border-radius:50%;background:rgba(12,196,90,0.18)"></div><div class="b" style="left:1079px;top:244.5px;width:36px;height:36px;border-radius:50%;background:#0bcb5b"></div><div class="t" style="left:1091.00px;top:253.50px;font-size:17px;line-height:19px;height:19px;color:#fff;font-weight:bold;letter-spacing:0.000px;">4</div><div class="b" style="left:0;top:0;width:1800px;height:1px;background:#121212"></div><div class="b" style="left:0;top:0;width:1px;height:1020px;background:#121212"></div><div class="b" style="left:1799px;top:0;width:1px;height:1020px;background:#121212"></div><div class="b" style="left:0;top:1019px;width:1800px;height:1px;background:#121212"></div></body></html>
